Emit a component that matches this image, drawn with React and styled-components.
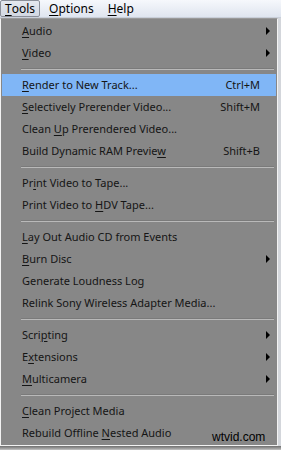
import React from 'react';
import styled, { createGlobalStyle } from 'styled-components';

const GlobalStyle = createGlobalStyle`
  html, body {
    margin: 0;
    padding: 0;
    background: #d3d6db;
  }
  body {
    width: 281px;
    height: 450px;
    overflow: hidden;
    font-family: "Noto Sans", "Open Sans", sans-serif;
  }
`;

const Window = styled.div`
  position: relative;
  width: 281px;
  height: 450px;
  display: flex;
  flex-direction: column;
`;

const MenuBar = styled.div`
  height: 17px;
  display: flex;
  align-items: stretch;
  background: linear-gradient(#f6f8fc, #dfe5ef);
  border-bottom: 1px solid #c9cfd9;
  font-size: 12px;
  color: #000;
`;

const BarItem = styled.div`
  display: flex;
  align-items: center;
  padding: 0 ${(p) => (p.$open ? 4 : 0)}px;
  margin-left: ${(p) => p.$left || 0}px;
  border: 1px solid ${(p) => (p.$open ? '#8a8f99' : 'transparent')};
  border-radius: ${(p) => (p.$open ? '2px' : '0')};
  background: ${(p) => (p.$open ? 'linear-gradient(#e4e8ef, #d2d8e2)' : 'transparent')};
  line-height: 15px;
`;

const Menu = styled.div`
  width: 276px;
  background: #878787;
  border: 1px solid #f2f2f2;
  border-top-color: #9a9a9a;
  padding: 1px 0 1px;
  display: flex;
  flex-direction: column;
  font-size: 11px;
  color: #151515;
`;

const Item = styled.div`
  height: 22px;
  box-sizing: border-box;
  display: flex;
  align-items: center;
  margin: 0 1px;
  padding: 0 0 2px 20px;
  background: ${(p) => (p.$hot ? '#80b6f6' : 'transparent')};
`;

const Label = styled.span`
  flex: 1;
  white-space: nowrap;
`;

const Shortcut = styled.span`
  width: 56px;
  text-align: right;
  margin-right: 16px;
  white-space: nowrap;
`;

const Arrow = styled.span`
  width: 0;
  height: 0;
  margin: 2px 6px 0 0;
  border-top: 4px solid transparent;
  border-bottom: 4px solid transparent;
  border-left: 4px solid #000;
`;

const Sep = styled.div`
  height: 10px;
  display: flex;
  align-items: center;
  padding-left: 20px;
  margin-right: 3px;

  &::after {
    content: '';
    flex: 1;
    height: 1px;
    background: #b9b9b9;
    box-shadow: 0 -1px 0 #7a7a7a;
  }
`;

const U = styled.span`
  text-decoration: underline;
  text-underline-offset: 2px;
`;

const Below = styled.div`
  flex: 1;
  background: linear-gradient(#6f6f6f, #a9a9a9 3px, #c9c9c9);
`;

const Watermark = styled.div`
  position: absolute;
  left: 212px;
  top: 430px;
  font-family: "Liberation Sans", Arial, sans-serif;
  font-size: 12px;
  color: #000;
`;

const groups = [
  [
    { l: <><U>A</U>udio</>, arrow: true },
    { l: <><U>V</U>ideo</>, arrow: true },
  ],
  [
    { l: <><U>R</U>ender to New Track...</>, sc: 'Ctrl+M', hot: true },
    { l: <><U>S</U>electively Prerender Video...</>, sc: 'Shift+M' },
    { l: <>Clean <U>U</U>p Prerendered Video...</> },
    { l: <>Build Dynamic RAM Previe<U>w</U></>, sc: 'Shift+B' },
  ],
  [
    { l: <>Pr<U>i</U>nt Video to Tape...</> },
    { l: <>Print Video to <U>H</U>DV Tape...</> },
  ],
  [
    { l: <><U>L</U>ay Out Audio CD from Events</> },
    { l: <><U>B</U>urn Disc</>, arrow: true },
    { l: 'Generate Loudness Log' },
    { l: 'Relink Sony Wireless Adapter Media...' },
  ],
  [
    { l: <>Scri<U>p</U>ting</>, arrow: true },
    { l: <>E<U>x</U>tensions</>, arrow: true },
    { l: <><U>M</U>ulticamera</>, arrow: true },
  ],
  [
    { l: <><U>C</U>lean Project Media</> },
    { l: <>Rebuild Offline <U>N</U>ested Audio</> },
  ],
];

export default function App() {
  return (
    <Window>
      <GlobalStyle />
      <MenuBar>
        <BarItem $open><U>T</U>ools</BarItem>
        <BarItem $left={8}><U>O</U>ptions</BarItem>
        <BarItem $left={12}><U>H</U>elp</BarItem>
      </MenuBar>
      <Menu>
        {groups.map((g, gi) => (
          <React.Fragment key={gi}>
            {gi > 0 && <Sep />}
            {g.map((it, i) => (
              <Item key={i} $hot={it.hot}>
                <Label>{it.l}</Label>
                {it.sc && <Shortcut>{it.sc}</Shortcut>}
                {it.arrow && <Arrow />}
              </Item>
            ))}
          </React.Fragment>
        ))}
      </Menu>
      <Below />
      <Watermark>wtvid.com</Watermark>
    </Window>
  );
}
